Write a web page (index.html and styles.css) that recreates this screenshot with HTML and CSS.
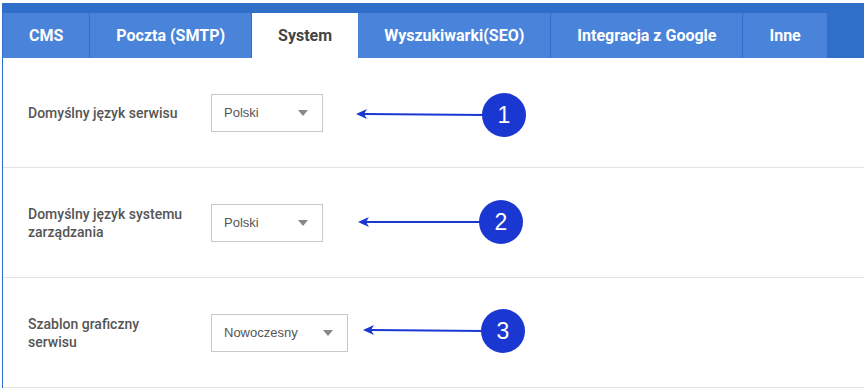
FILE: index.html
```html
<!DOCTYPE html>
<html lang="pl">

<head>
  <meta charset="UTF-8">
  <meta name="viewport" content="width=device-width, initial-scale=1.0">
  <link rel="stylesheet" href="styles.css">
</head>

<body>
  <div class="page">
    <nav class="tabs">
      <a class="tab">CMS</a>
      <a class="tab">Poczta (SMTP)</a>
      <a class="tab active">System</a>
      <a class="tab">Wyszukiwarki(SEO)</a>
      <a class="tab">Integracja z Google</a>
      <a class="tab">Inne</a>
    </nav>

    <div class="panel">
      <div class="row">
        <div class="label">Domyślny język serwisu</div>
        <div class="select"><span>Polski</span><i class="caret"></i></div>
      </div>
      <div class="row">
        <div class="label">Domyślny język systemu zarządzania</div>
        <div class="select"><span>Polski</span><i class="caret"></i></div>
      </div>
      <div class="row">
        <div class="label">Szablon graficzny serwisu</div>
        <div class="select"><span>Nowoczesny</span><i class="caret"></i></div>
      </div>
    </div>
  </div>

  <!-- annotation markers -->
  <svg class="notes" width="864" height="391" viewBox="0 0 864 391">
    <g class="note">
      <line x1="364" y1="114" x2="486" y2="115" />
      <polygon points="356,114 367,109 364,114 367,119" />
      <circle cx="504" cy="115" r="22" />
      <text x="504" y="123">1</text>
    </g>
    <g class="note">
      <line x1="366" y1="222" x2="482" y2="222" />
      <polygon points="358,222 369,217 366,222 369,227" />
      <circle cx="501" cy="222" r="22" />
      <text x="501" y="230">2</text>
    </g>
    <g class="note">
      <line x1="371" y1="330" x2="485" y2="331" />
      <polygon points="363,330 374,325 371,330 374,335" />
      <circle cx="503" cy="331" r="22" />
      <text x="503" y="339">3</text>
    </g>
  </svg>
</body>

</html>
```

FILE: styles.css
```css
body {
  margin: 0;
  padding: 0;
  background: #fff;
  font-family: Roboto, 'Liberation Sans', Arial, sans-serif;
}

.page {
  margin: 3px 0 0 2px;
}

.tabs {
  display: flex;
  background: #2f6ec9;
  padding: 10px 0 0 1px;
}

.tab {
  display: flex;
  align-items: center;
  height: 45px;
  padding: 0 26px;
  background: #4a84da;
  border-right: 1px solid #2f6ec9;
  color: #fff;
  font-size: 16px;
  font-weight: 700;
}

.tab.active {
  background: #fff;
  color: #444;
  border-right: 0;
}

.panel {
  border-left: 1px solid #2f6ec9;
}

.row {
  display: flex;
  align-items: center;
  height: 110px;
  box-sizing: border-box;
  border-bottom: 1px solid #e3e3e3;
  padding-left: 25px;
}

.label {
  width: 160px;
  margin-right: 23px;
  color: #555;
  font-size: 14px;
  font-weight: 500;
  line-height: 18px;
}

.select {
  display: flex;
  align-items: center;
  justify-content: space-between;
  gap: 25px;
  min-width: 112px;
  height: 38px;
  box-sizing: border-box;
  padding: 0 14px 0 12px;
  border: 1px solid #c8c8c8;
  color: #555;
  font-family: 'Liberation Sans', Arial, sans-serif;
  font-size: 13px;
}

.caret {
  width: 0;
  height: 0;
  border-left: 5px solid transparent;
  border-right: 5px solid transparent;
  border-top: 6px solid #888;
}

.notes {
  position: absolute;
  top: 0;
  left: 0;
  pointer-events: none;
}

.note line {
  stroke: #1a37d2;
  stroke-width: 2;
}

.note polygon,
.note circle {
  fill: #1a37d2;
}

.note text {
  fill: #fff;
  font-family: 'Liberation Sans', Arial, sans-serif;
  font-size: 23px;
  text-anchor: middle;
}
```
